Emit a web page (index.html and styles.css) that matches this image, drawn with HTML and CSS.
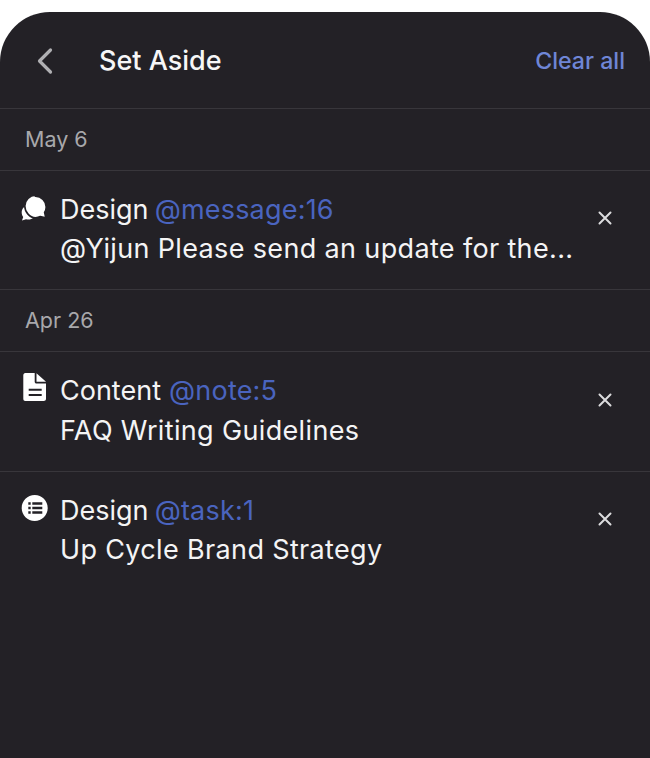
FILE: index.html
```html
<!DOCTYPE html>
<html lang="en">
<head>
<meta charset="utf-8">
<title>Set Aside</title>
<link rel="stylesheet" href="styles.css">
</head>
<body>
<main class="sheet">
  <header class="header">
    <svg class="back" width="18" height="28" viewBox="0 0 18 28"><path d="M15.500 3 L4.500 14 L15.500 25" fill="none" stroke="#b0b0b3" stroke-width="3.200" stroke-linecap="round" stroke-linejoin="round"/></svg>
    <h1 class="title">Set Aside</h1>
    <span class="clear">Clear all</span>
  </header>

  <div class="date">May 6</div>
  <article class="item item-tight">
    <svg class="icon" width="28" height="30" viewBox="0 0 28 30"><path fill="#fff" d="M8.500 12.500C4.600 12.500 1.700 15.600 1.700 19.500c0 1.700.5 3.200 1.500 4.400L2 27.500l4-1.300c.8.300 1.600.4 2.500.4 3.900 0 7-3.200 7-7.100 0-3.900-3.100-7-7-7z"/><path fill="#fff" stroke="#232126" stroke-width="1.600" d="M15.500 2.200c-5.800 0-10.700 4.800-10.700 10.800s4.900 11.700 10.700 11.700c1.800 0 3.400-.4 4.900-1.200l5.300 1.200-1.100-5.200c1-1.600 1.600-3.500 1.600-5.500 0-6-4.900-10.800-10.700-10.800z"/></svg>
    <div class="body">
      <p class="line meta"><span>Design</span> <span class="ref">@message:16</span></p>
      <p class="line subject">@Yijun Please send an update for the...</p>
    </div>
    <svg class="close" width="14" height="14" viewBox="0 0 14 14"><path d="M1.500 1.500 L12.500 12.500 M12.500 1.500 L1.500 12.500" stroke="#dcdcde" stroke-width="2" stroke-linecap="round"/></svg>
  </article>

  <div class="date">Apr 26</div>
  <article class="item item-tall">
    <svg class="icon icon-doc" width="28" height="30" viewBox="0 0 28 30"><path fill="#fff" d="M5.300 0h9.400v8.700c0 1 .8 1.800 1.800 1.800H26v15.200c0 1.300-1 2.300-2.300 2.300H5.300C4.100 28 3.300 27 3.300 25.700V2.300C3.300 1 4.100 0 5.300 0z"/><path fill="#fff" d="M16.500 0.200 26 8.800H16.500z"/><path fill="#232126" d="M8.700 15.700h13v2.100h-13zM8.700 21h13v2.100h-13z"/></svg>
    <div class="body">
      <p class="line meta meta-wide"><span>Content</span> <span class="ref">@note:5</span></p>
      <p class="line subject">FAQ Writing Guidelines</p>
    </div>
    <svg class="close" width="14" height="14" viewBox="0 0 14 14"><path d="M1.500 1.500 L12.500 12.500 M12.500 1.500 L1.500 12.500" stroke="#dcdcde" stroke-width="2" stroke-linecap="round"/></svg>
  </article>
  <article class="item item-tight">
    <svg class="icon" width="28" height="30" viewBox="0 0 28 30"><path fill="#fff" fill-rule="evenodd" d="M14.700 1C7.500 1 1.700 6.800 1.700 14s5.800 13 13 13 13-5.800 13-13-5.800-13-13-13zM8.300 8.300h2.400v2.400H8.300zM12.300 8.300h10v2.400h-10zM8.300 12.800h2.400v2.400H8.300zM12.300 12.800h10v2.400h-10zM8.300 17.300h2.400v2.400H8.300zM12.300 17.300h10v2.400h-10z"/></svg>
    <div class="body">
      <p class="line meta"><span>Design</span> <span class="ref">@task:1</span></p>
      <p class="line subject">Up Cycle Brand Strategy</p>
    </div>
    <svg class="close" width="14" height="14" viewBox="0 0 14 14"><path d="M1.500 1.500 L12.500 12.500 M12.500 1.500 L1.500 12.500" stroke="#dcdcde" stroke-width="2" stroke-linecap="round"/></svg>
  </article>
</main>
</body>
</html>
```
FILE: styles.css
```css
* { box-sizing: border-box; }
html, body { margin: 0; height: 100%; background: #fff; }
body { padding-top: 12px; overflow: hidden; font-family: Inter, "Liberation Sans", sans-serif; }
.sheet {
  height: 746px;
  background: #232126;
  border-radius: 50px 50px 0 0;
  color: #f4f4f5;
}
.header {
  height: 97px;
  display: flex;
  align-items: center;
  padding: 0 25px 0 35px;
  border-bottom: 1px solid #38363b;
}
.back { flex: none; margin-top: 1px; }
.title {
  margin: 0 0 0 46px;
  flex: 1;
  font-size: 27px;
  font-weight: 500;
  color: #f6f6f7;
}
.clear { font-size: 23.200px; font-weight: 500; color: #6f86d6; padding-top: 1px; }
.date {
  height: 62px;
  display: flex;
  align-items: center;
  padding: 0 0 2px 25px;
  font-size: 21.500px;
  color: #a8a8ab;
  border-bottom: 1px solid #38363b;
}
.item {
  height: 119px;
  display: flex;
  align-items: flex-start;
  padding: 19px 38px 0 20px;
  border-bottom: 1px solid #38363b;
}
.item-tall { height: 120px; }
.icon { flex: none; margin-top: 3px; }
.icon-doc { margin-top: 2px; }
.body { flex: 1; margin-left: 12px; margin-right: -1px; min-width: 0; }
.line { margin: 0; font-size: 27px; line-height: 40px; white-space: nowrap; }
.meta { word-spacing: -1.500px; }
.meta-wide { word-spacing: .500px; }
.subject { letter-spacing: .350px; }
.item-tight .subject { margin-top: -1px; }
.ref { color: #4a64bf; letter-spacing: .200px; }
.close { flex: none; margin-top: 22px; }
.item-tight .close { margin-top: 21px; }
.item:last-child { border-bottom: 0; }
```
